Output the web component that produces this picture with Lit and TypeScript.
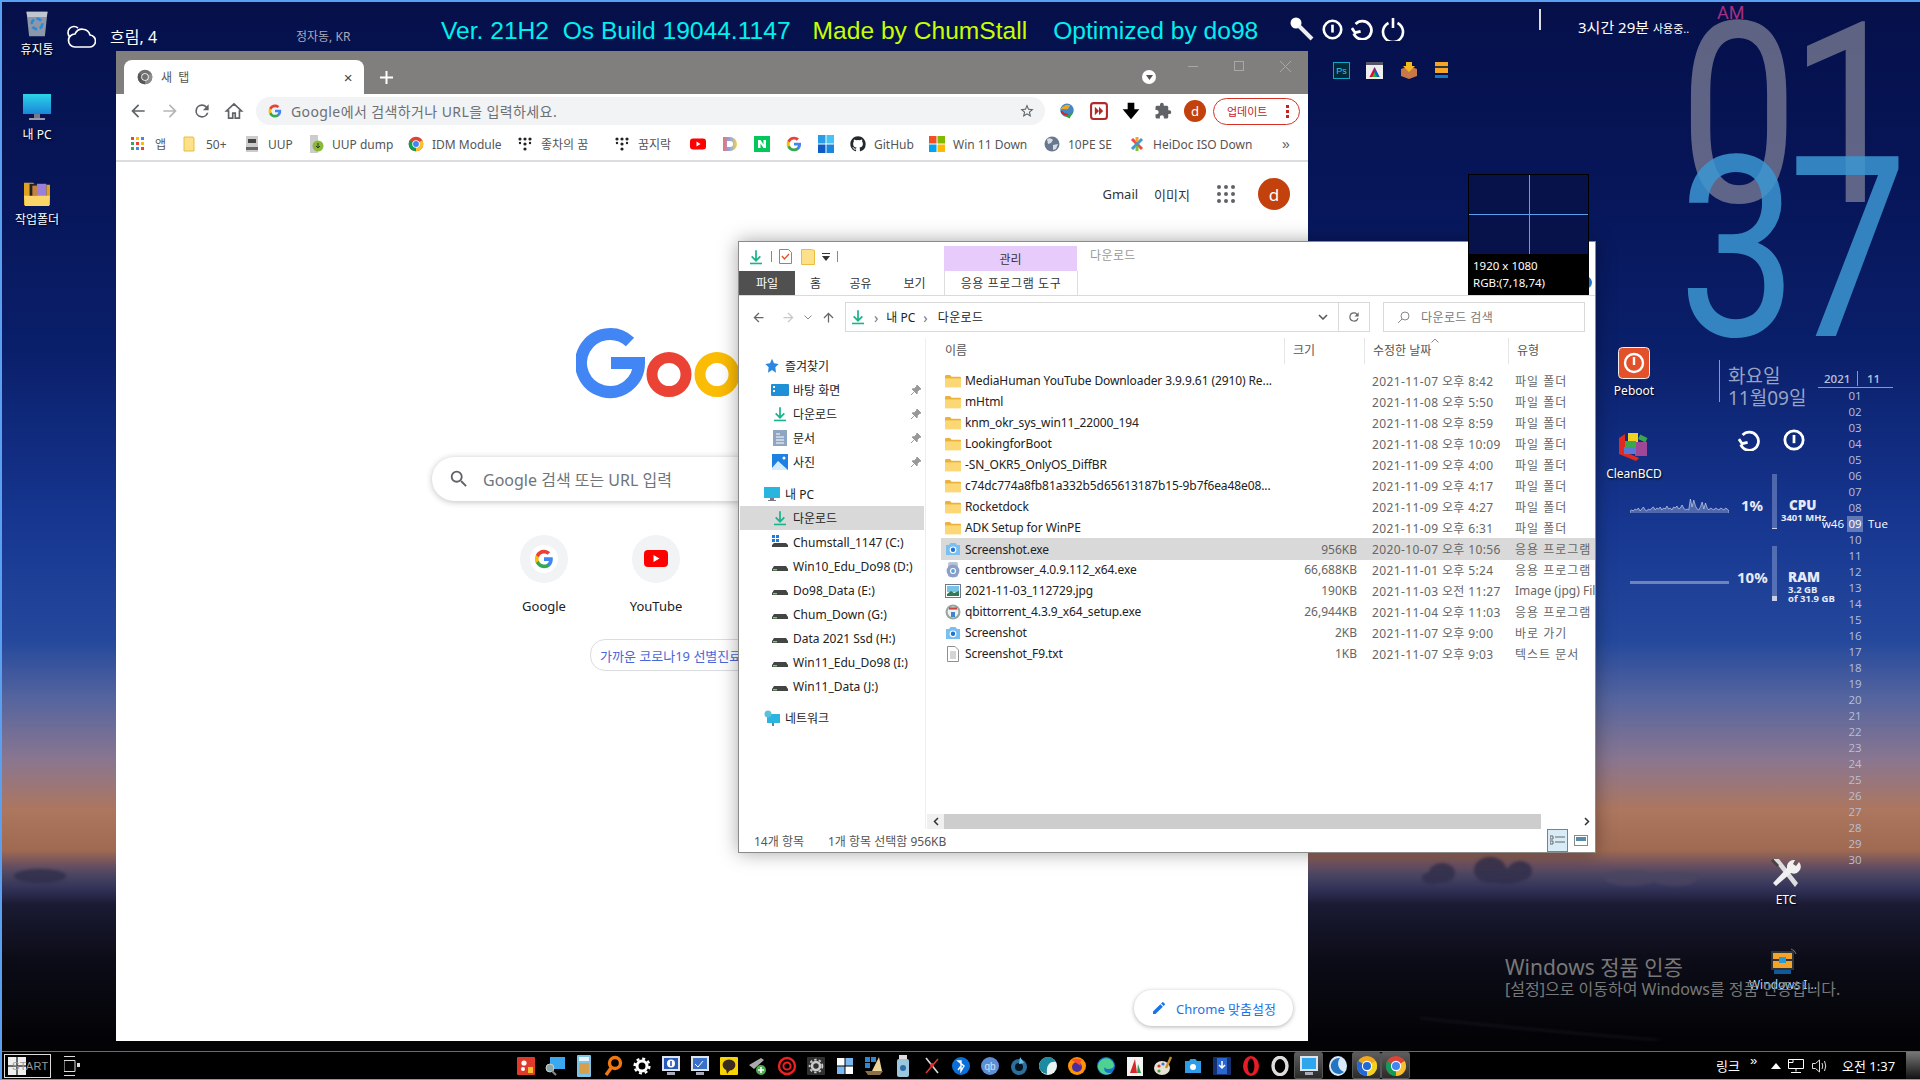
import { LitElement, html, css, svg } from 'lit';
import { customElement } from 'lit/decorators.js';

const mp = (d: string, fill = 'currentColor') => svg`<path d=${d} fill=${fill}></path>`;
const box = (inner: unknown, size = 16, vb = 24) =>
  html`<svg width=${size} height=${size} viewBox="0 0 ${vb} ${vb}">${inner}</svg>`;

const P = {
  back: 'M20 11H7.83l5.59-5.59L12 4l-8 8 8 8 1.41-1.41L7.83 13H20v-2z',
  fwd: 'M4 11h12.17l-5.59-5.59L12 4l8 8-8 8-1.41-1.41L16.17 13H4v-2z',
  up: 'M11 20V7.83l-5.59 5.59L4 12l8-8 8 8-1.41 1.41L13 7.83V20h-2z',
  reload: 'M17.65 6.35A7.96 7.96 0 0 0 12 4a8 8 0 1 0 7.73 10h-2.08A6 6 0 1 1 12 6c1.66 0 3.14.69 4.22 1.78L13 11h7V4l-2.35 2.35z',
  star: 'M22 9.24l-7.19-.62L12 2 9.19 8.63 2 9.24l5.46 4.73L5.82 21 12 17.27 18.18 21l-1.63-7.03L22 9.24zM12 15.4l-3.76 2.27 1-4.28-3.32-2.88 4.38-.38L12 6.1l1.71 4.04 4.38.38-3.32 2.88 1 4.28L12 15.4z',
  puzzle: 'M20.5 11H19V7c0-1.1-.9-2-2-2h-4V3.5a2.5 2.5 0 0 0-5 0V5H4c-1.1 0-1.99.9-1.99 2v3.8H3.5c1.49 0 2.7 1.21 2.7 2.7s-1.21 2.7-2.7 2.7H2V20c0 1.1.9 2 2 2h3.8v-1.5c0-1.49 1.21-2.7 2.7-2.7s2.7 1.21 2.7 2.7V22H17c1.1 0 2-.9 2-2v-4h1.5a2.5 2.5 0 0 0 0-5z',
  search: 'M15.5 14h-.79l-.28-.27A6.47 6.47 0 0 0 16 9.5 6.5 6.5 0 1 0 9.5 16c1.61 0 3.09-.59 4.23-1.57l.27.28v.79l5 4.99L20.49 19l-4.99-5zm-6 0C7.01 14 5 11.99 5 9.5S7.01 5 9.5 5 14 7.01 14 9.5 11.99 14 9.5 14z',
  pencil: 'M3 17.25V21h3.75L17.81 9.94l-3.75-3.75L3 17.25zM20.71 7.04a1 1 0 0 0 0-1.41l-2.34-2.34a1 1 0 0 0-1.41 0l-1.83 1.83 3.75 3.75 1.83-1.83z',
  github: 'M12 .5C5.65.5.5 5.65.5 12c0 5.08 3.29 9.39 7.86 10.91.58.1.79-.25.79-.56v-2c-3.2.7-3.87-1.36-3.87-1.36-.52-1.33-1.28-1.68-1.28-1.68-1.05-.72.08-.7.08-.7 1.16.08 1.77 1.19 1.77 1.19 1.03 1.77 2.7 1.26 3.36.96.1-.75.4-1.26.73-1.55-2.55-.29-5.24-1.28-5.24-5.69 0-1.26.45-2.28 1.18-3.09-.12-.29-.51-1.46.11-3.05 0 0 .96-.31 3.15 1.18a10.9 10.9 0 0 1 5.74 0c2.19-1.49 3.15-1.18 3.15-1.18.62 1.59.23 2.76.11 3.05.74.81 1.18 1.83 1.18 3.09 0 4.42-2.69 5.39-5.26 5.68.41.36.78 1.05.78 2.12v3.14c0 .3.21.66.8.55A11.5 11.5 0 0 0 23.5 12C23.5 5.65 18.35.5 12 .5z',
};

const gLogo = (size = 16) => box(svg`
  ${mp('M22.56 12.25c0-.78-.07-1.53-.2-2.25H12v4.26h5.92c-.26 1.37-1.04 2.53-2.21 3.31v2.77h3.57c2.08-1.92 3.28-4.74 3.28-8.09z', '#4285f4')}
  ${mp('M12 23c2.97 0 5.46-.98 7.28-2.66l-3.57-2.77c-.98.66-2.23 1.06-3.71 1.06-2.86 0-5.29-1.93-6.16-4.53H2.18v2.84C3.99 20.53 7.7 23 12 23z', '#34a853')}
  ${mp('M5.84 14.09c-.22-.66-.35-1.36-.35-2.09s.13-1.43.35-2.09V7.07H2.18C1.43 8.55 1 10.22 1 12s.43 3.45 1.18 4.93l3.66-2.84z', '#fbbc05')}
  ${mp('M12 5.38c1.62 0 3.06.56 4.21 1.64l3.15-3.15C17.45 2.09 14.97 1 12 1 7.7 1 3.99 3.47 2.18 7.07l3.66 2.84c.87-2.6 3.3-4.53 6.16-4.53z', '#ea4335')}`, size);

const chromeLogo = (size = 16, r = '#db4437', g = '#0f9d58', y = '#fbc02d', b = '#4285f4') => box(svg`
  <circle cx="12" cy="12" r="11" fill=${r}></circle>
  <path d="M12 12L2.5 6.5A11 11 0 0 0 12 23z" fill=${g}></path>
  <path d="M12 12V23A11 11 0 0 0 21.5 6.5z" fill=${y}></path>
  <circle cx="12" cy="12" r="5.6" fill="#fff"></circle><circle cx="12" cy="12" r="4.4" fill=${b}></circle>`, size);

const dlArrow = (size = 16) => box(svg`
  <path d="M12 2v15M5.5 11l6.5 6.5 6.5-6.5" fill="none" stroke="#1bb38d" stroke-width="2.6"></path>
  <rect x="3" y="20.5" width="18" height="2.4" fill="#1bb38d"></rect>`, size);

const folderIcon = html`<svg width="16" height="14" viewBox="0 0 16 14">
  <path d="M0 2.2Q0 1 1.2 1H5l1.6 1.8H15Q16 2.8 16 3.8V13H0z" fill="#eab23a"></path>
  <path d="M0 4.4H16V13.4H0z" fill="#fbd875"></path></svg>`;

const driveIcon = html`<svg width="16" height="16" viewBox="0 0 16 16">
  <path d="M2 8h12l2 3v2H0v-2z" fill="#444"></path><rect x="1" y="11" width="4" height="1.4" fill="#5be05b"></rect></svg>`;

const sysDrive = html`<svg width="16" height="16" viewBox="0 0 16 16">
  <rect x="0" y="1" width="3" height="3" fill="#1c7ce0"></rect><rect x="4" y="1" width="3" height="3" fill="#1c7ce0"></rect>
  <rect x="0" y="5" width="3" height="3" fill="#1c7ce0"></rect><rect x="4" y="5" width="3" height="3" fill="#1c7ce0"></rect>
  <path d="M2 9h12l2 2v2H0v-2z" fill="#444"></path></svg>`;

const cameraIcon = html`<svg width="16" height="16" viewBox="0 0 16 16">
  <path d="M1 4h3l1.5-2h5L12 4h3v10H1z" fill="#79bff0"></path>
  <circle cx="8" cy="8.8" r="3.4" fill="#fff"></circle><circle cx="8" cy="8.8" r="2.2" fill="#1f74d6"></circle></svg>`;

const centIcon = html`<svg width="16" height="16" viewBox="0 0 16 16">
  <rect x="3" y="0" width="10" height="15" rx="2" fill="#b9c3d8"></rect>
  <circle cx="8" cy="9" r="6.4" fill="#8e9ec5"></circle><circle cx="8" cy="9" r="3" fill="#fff"></circle><circle cx="8" cy="9" r="1.9" fill="#4fa5dd"></circle></svg>`;

const jpgIcon = html`<svg width="16" height="16" viewBox="0 0 16 16">
  <rect x=".5" y="1.5" width="15" height="13" fill="#fff" stroke="#6e7a8a"></rect>
  <rect x="2" y="3" width="12" height="6" fill="#78c3e8"></rect><path d="M2 11l4-3 3 2 5-2v5H2z" fill="#2f7a5a"></path></svg>`;

const qbitIcon = html`<svg width="16" height="16" viewBox="0 0 16 16">
  <circle cx="8" cy="8" r="7.5" fill="#9aa5a0"></circle><circle cx="8" cy="8" r="5.4" fill="#eef2ee"></circle>
  <rect x="4" y="3.4" width="8" height="2.2" fill="#c44"></rect><rect x="6" y="8" width="4" height="5" fill="#3a86d0"></rect></svg>`;

const txtIcon = html`<svg width="16" height="16" viewBox="0 0 16 16">
  <path d="M2.5.5h7.5l3.5 3.5v11.5h-11z" fill="#fff" stroke="#8f8f8f"></path>
  <path d="M5 6h6M5 8h6M5 10h6M5 12h6" stroke="#aaa"></path></svg>`;

const pinIcon = html`<svg width="12" height="12" viewBox="0 0 12 12">
  <path d="M7 1l4 4-1.4.4-2.3 2.3L7 10 2 5l2.3-.3 2.3-2.3zM3.8 8.2L1 11" fill="#999" stroke="#999"></path></svg>`;

const powerRing = (size = 22) => html`<svg width=${size} height=${size} viewBox="0 0 24 24" fill="none" stroke="#fff" stroke-width="3">
  <circle cx="12" cy="12" r="10"></circle><path d="M12 6.5v9"></path></svg>`;
const refreshRing = (size = 22) => html`<svg width=${size} height=${size} viewBox="0 0 24 24" fill="none" stroke="#fff" stroke-width="3">
  <path d="M5 6.5A10 10 0 1 1 3 17"></path><path d="M1 11l3.5 5 6-1.5" fill="none"></path></svg>`;
const powerOpen = (size = 24) => html`<svg width=${size} height=${size} viewBox="0 0 24 24" fill="none" stroke="#fff" stroke-width="2.6">
  <path d="M7.5 6a10 10 0 1 0 9 0"></path><path d="M12 1v10"></path></svg>`;

const square = (c: string, inner: unknown = '') => html`<svg width="18" height="18" viewBox="0 0 18 18"><rect width="18" height="18" rx="1" fill=${c}></rect>${inner}</svg>`;
const round = (c: string, inner: unknown = '') => html`<svg width="20" height="20" viewBox="0 0 20 20"><circle cx="10" cy="10" r="9" fill=${c}></circle>${inner}</svg>`;
const monitor = (c: string, inner: unknown = '') => html`<svg width="20" height="22" viewBox="0 0 20 22">
  <rect x="1" y="1" width="18" height="15" fill="#dfe3ea"></rect><rect x="3" y="3" width="14" height="11" fill=${c}></rect>
  <rect x="6" y="17" width="8" height="3" fill="#aab"></rect>${inner}</svg>`;

const bars = (colors: string[], size = 16) => html`<svg width=${size} height=${size} viewBox="0 0 16 16">
  <rect width="7.5" height="7.5" fill=${colors[0]}></rect><rect x="8.5" width="7.5" height="7.5" fill=${colors[1]}></rect>
  <rect y="8.5" width="7.5" height="7.5" fill=${colors[2]}></rect><rect x="8.5" y="8.5" width="7.5" height="7.5" fill=${colors[3]}></rect></svg>`;

const taskIcons: { icon: unknown; active?: boolean }[] = [
  { icon: square('#e03a2a', svg`<circle cx="7" cy="6" r="2.6" fill="#fff"></circle><circle cx="6" cy="12" r="2" fill="#fff"></circle><rect x="11" y="10" width="5" height="6" fill="#f8c030"></rect>`) },
  { icon: html`<svg width="22" height="20" viewBox="0 0 22 20"><rect x="6" y="1" width="15" height="12" fill="#3ba8f0"></rect><circle cx="6" cy="12" r="4" fill="#8aa" stroke="#ccc"></circle><path d="M8 15l4 4" stroke="#888" stroke-width="2"></path></svg>` },
  { icon: html`<svg width="14" height="22" viewBox="0 0 14 22"><rect width="14" height="22" rx="1" fill="#7cc4e8"></rect><rect x="2" y="2" width="10" height="4" fill="#e8f4fa"></rect><rect x="2" y="8" width="10" height="11" fill="#d7a04c"></rect></svg>` },
  { icon: html`<svg width="20" height="22" viewBox="0 0 20 22" fill="none" stroke="#f07810" stroke-width="3.4"><circle cx="12" cy="8" r="5.5"></circle><path d="M8 13l-5 7"></path></svg>` },
  { icon: html`<svg width="18" height="18" viewBox="0 0 18 18"><circle cx="9" cy="9" r="5" fill="none" stroke="#fff" stroke-width="3"></circle><circle cx="9" cy="9" r="7.4" fill="none" stroke="#fff" stroke-width="2.4" stroke-dasharray="3 2.8"></circle></svg>` },
  { icon: monitor('#2858b8', svg`<circle cx="10" cy="8.5" r="4" fill="#fff"></circle><rect x="9.2" y="6" width="1.6" height="5" fill="#2858b8"></rect>`) },
  { icon: monitor('#3a70c8', svg`<path d="M5 9l3 3 5-6" stroke="#fff" fill="none"></path>`) },
  { icon: square('#f8d400', svg`<ellipse cx="9" cy="8" rx="6.4" ry="5.6" fill="#3a2a20"></ellipse><path d="M6 12l1 5 3-4z" fill="#3a2a20"></path>`) },
  { icon: html`<svg width="20" height="20" viewBox="0 0 20 20"><path d="M1 9l12-7 3 2-10 9z" fill="#aaa"></path><circle cx="13" cy="14" r="5" fill="#4cb050"></circle><path d="M13 11v6M10 14h6" stroke="#fff" stroke-width="1.6"></path></svg>` },
  { icon: html`<svg width="20" height="20" viewBox="0 0 20 20" fill="none" stroke="#ee2020"><circle cx="10" cy="10" r="8" stroke-width="2.4"></circle><circle cx="10" cy="10" r="3.6" stroke-width="2"></circle></svg>` },
  { icon: square('#303030', svg`<circle cx="9" cy="9" r="4" fill="none" stroke="#ccc" stroke-width="2.6"></circle><circle cx="9" cy="9" r="6.4" fill="none" stroke="#ccc" stroke-width="1.8" stroke-dasharray="2.4 2.2"></circle>`) },
  { icon: bars(['#fff', '#7ab8f0', '#7ab8f0', '#fff']) },
  { icon: html`<svg width="20" height="22" viewBox="0 0 20 22"><rect x="1" y="2" width="5" height="5" fill="#2a86d8"></rect><rect x="7" y="2" width="5" height="5" fill="#2a86d8"></rect><rect x="1" y="8" width="5" height="5" fill="#2a86d8"></rect><path d="M8 16L15 2l3 14z" fill="#ecd69c"></path><path d="M1 16h18l-3 4H4z" fill="#8a6f48"></path></svg>` },
  { icon: html`<svg width="14" height="22" viewBox="0 0 14 22"><rect x="3" y="0" width="8" height="4" fill="#ddd"></rect><rect x="1" y="4" width="12" height="18" rx="2" fill="#9cc6de"></rect><circle cx="7" cy="13" r="3" fill="#2b6ea8"></circle></svg>` },
  { icon: html`<svg width="18" height="20" viewBox="0 0 18 20" fill="none" stroke-width="1.6"><path d="M3 2l12 15" stroke="#ddd"></path><path d="M15 3L3 17" stroke="#d33"></path><circle cx="9" cy="9" r="2" fill="#d33" stroke="none"></circle></svg>` },
  { icon: round('#0a6fd8', svg`<path d="M7 5l6 5-3 5V5zM7 14l3-4" stroke="#fff" fill="none" stroke-width="1.4"></path>`) },
  { icon: round('#5d8fd6', svg`<text x="10" y="13.6" font-size="10" font-family="Liberation Sans" text-anchor="middle" fill="#cfe0f8">qb</text>`) },
  { icon: html`<svg width="18" height="20" viewBox="0 0 18 20"><circle cx="9" cy="11" r="8" fill="#2a6f9e"></circle><circle cx="9" cy="11" r="4" fill="#061420"></circle><path d="M10 1l4 6-5 1z" fill="#6bc0ea"></path></svg>` },
  { icon: round('#e8f4f4', svg`<path d="M1 10a9 9 0 0 1 17-4C12 5 8 9 9 18 4 17 1 14 1 10z" fill="#1c8aa0"></path>`) },
  { icon: round('#ff9400', svg`<circle cx="10" cy="11" r="5" fill="#4a2ea0"></circle><path d="M4 4q6-3 11 0-3 2-1 6l-6-4z" fill="#ff4d30"></path>`) },
  { icon: round('#1673c8', svg`<path d="M2 12a8 8 0 0 1 16-3c0 3-3 4-6 4-2 0-3-1-3-2-2 2 0 6 4 6 2 0 3 0 4-1a9 9 0 0 1-15-4z" fill="#4ed290"></path>`) },
  { icon: html`<svg width="16" height="20" viewBox="0 0 16 20"><rect y="1" width="16" height="19" fill="#f4f4f4"></rect><path d="M3 17L8 3l2 14z" fill="#d62828"></path><path d="M10 17l1-9 3 9z" fill="#2a9a50"></path></svg>` },
  { icon: html`<svg width="20" height="20" viewBox="0 0 20 20"><ellipse cx="8" cy="12" rx="8" ry="7" fill="#e8e2d2"></ellipse><circle cx="5" cy="10" r="1.6" fill="#d33"></circle><circle cx="9" cy="8" r="1.6" fill="#3a70d8"></circle><circle cx="5" cy="15" r="1.6" fill="#3aa84a"></circle><path d="M17 1l-5 11" stroke="#c8902a" stroke-width="2.4"></path></svg>` },
  { icon: html`<svg width="18" height="16" viewBox="0 0 18 16"><path d="M1 3h4l1.5-2h5L13 3h4v12H1z" fill="#2f9ce8"></path><circle cx="9" cy="9" r="3" fill="#fff"></circle></svg>` },
  { icon: square('#14306e', svg`<rect x="4" y="1" width="10" height="16" fill="#2a66d0"></rect><path d="M9 4v7M6 8l3 3 3-3" stroke="#fff" fill="none" stroke-width="1.5"></path>`) },
  { icon: html`<svg width="18" height="22" viewBox="0 0 18 22"><ellipse cx="9" cy="11" rx="8" ry="10" fill="#e81c24"></ellipse><ellipse cx="9" cy="11" rx="3.4" ry="7.6" fill="#000"></ellipse></svg>` },
  { icon: html`<svg width="18" height="20" viewBox="0 0 18 20"><ellipse cx="9" cy="10" rx="7" ry="8.6" fill="none" stroke="#ddd" stroke-width="3.4"></ellipse></svg>` },
  { icon: monitor('#2ea6ee'), active: true },
  { icon: html`<svg width="20" height="22" viewBox="0 0 20 22"><ellipse cx="10" cy="11" rx="9" ry="10" fill="#d8e8f8"></ellipse><path d="M12 3a8 8 0 1 0 4 14A9 9 0 0 1 12 3z" fill="#2474c4"></path></svg>` },
  { icon: chromeLogo(22, '#f2a81e', '#2468d8', '#f2d21e', '#2468d8'), active: true },
  { icon: chromeLogo(22), active: true },
];

@customElement('task-bar')
export class TaskBar extends LitElement {
  static styles = css`
    :host { display: flex; align-items: center; height: 27px; background: #000; border-top: 1px solid #6b6b6b; color: #fff; }
    .start { box-sizing: border-box; width: 47px; height: 24px; margin-left: 4px; border: 1px solid #ddd; position: relative; display: flex; align-items: center; }
    .start svg { position: absolute; left: 3px; top: 2px; }
    .start span { font: 11px "Liberation Sans", sans-serif; color: #999; margin-left: 7px; letter-spacing: .3px; position: relative; }
    .view { margin-left: 13px; display: flex; }
    .icons { margin-left: 431px; display: flex; align-items: center; height: 100%; }
    .slot { width: 29px; height: 100%; display: flex; align-items: center; justify-content: center; }
    .slot.active { box-sizing: border-box; background: linear-gradient(#5d5d5d, #2a2a2a); border: 1px solid #555; border-radius: 2px; }
    .tray { margin-left: auto; display: flex; align-items: center; height: 100%; font-size: 13px; }
    .tray .link { width: 34px; }
    .tray .more { width: 21px; font: 13px "Liberation Sans", sans-serif; margin-top: -10px; }
    .tray .up { width: 17px; display: flex; }
    .tray .net { width: 24px; display: flex; }
    .tray .vol { width: 30px; display: flex; }
    .tray .clock { width: 64px; }
    .tray .desk { width: 14px; height: 100%; background: linear-gradient(#777, #111); }
  `;

  render() {
    return html`
      <div class="start">
        ${bars(['#eee', '#eee', '#eee', '#eee'], 18)}
        <span>START</span>
      </div>
      <div class="view">
        <svg width="16" height="20" viewBox="0 0 16 20" fill="none" stroke="#ddd"><path d="M0 .5h11M0 4.5h11v11H0zM0 19.5h11"></path><rect x="13" y="7" width="3" height="4" fill="#ddd" stroke="none"></rect></svg>
      </div>
      <div class="icons">
        ${taskIcons.map(t => html`<div class="slot ${t.active ? 'active' : ''}">${t.icon}</div>`)}
      </div>
      <div class="tray">
        <span class="link">링크</span>
        <span class="more">»</span>
        <span class="up"><svg width="10" height="6" viewBox="0 0 10 6"><path d="M0 6L5 0l5 6z" fill="#fff"></path></svg></span>
        <span class="net"><svg width="16" height="14" viewBox="0 0 16 14" fill="none" stroke="#fff"><path d="M5 .5h10.5v9H.5v-9H5v3H.5M8 9.5v3M3 13.5h10"></path></svg></span>
        <span class="vol"><svg width="16" height="14" viewBox="0 0 16 14" fill="none" stroke="#ddd"><path d="M.5 4.5h3l4-3.500v12l-4-3.500h-3zM10 4q1.500 3 0 6M12.500 2q2.500 5 0 10"></path></svg></span>
        <span class="clock">오전 1:37</span>
        <span class="desk"></span>
      </div>
    `;
  }
}

const dotsIcon = html`<svg width="16" height="16" viewBox="0 0 16 16" fill="#222"><circle cx="3" cy="3" r="1.6"></circle><circle cx="8" cy="3" r="1.6"></circle><circle cx="13" cy="3" r="1.6"></circle><circle cx="8" cy="8" r="1.6"></circle><circle cx="8" cy="13" r="1.6"></circle><circle cx="3" cy="7" r="1.2"></circle><circle cx="13" cy="7" r="1.2"></circle></svg>`;
const gridColors = ['#ea4335', '#fbbc05', '#4285f4', '#34a853', '#ea4335', '#fbbc05', '#34a853', '#4285f4', '#ea4335'];

const bookmarks: { w: number; icon: unknown; label?: string }[] = [
  { w: 51, label: '앱', icon: html`<svg width="16" height="16" viewBox="0 0 16 16">${[0, 1, 2].flatMap(r => [0, 1, 2].map(c => svg`<rect x=${c * 5} y=${r * 5 + 1} width="3" height="3" fill=${gridColors[r * 3 + c]}></rect>`))}</svg>` },
  { w: 62, label: '50+', icon: html`<svg width="16" height="16" viewBox="0 0 16 16"><path d="M2 1h9l1 1v13H2z" fill="#fce08a" stroke="#e8bd40"></path></svg>` },
  { w: 64, label: 'UUP', icon: html`<svg width="16" height="18" viewBox="0 0 16 18"><rect x="2" y="1" width="12" height="16" fill="#ccc"></rect><rect x="4" y="4" width="8" height="4" fill="#444"></rect><rect x="2" y="12" width="12" height="3" fill="#666"></rect></svg>` },
  { w: 100, label: 'UUP dump', icon: html`<svg width="16" height="18" viewBox="0 0 16 18"><rect x="2" y="0" width="8" height="18" fill="#ccc"></rect><circle cx="10" cy="11" r="5.5" fill="#8ab838"></circle><path d="M10 8v5M8 11l2 2 2-2" stroke="#333" fill="none"></path></svg>` },
  { w: 109, label: 'IDM Module', icon: chromeLogo(16) },
  { w: 97, label: '좋차의 꿈', icon: dotsIcon },
  { w: 76, label: '꿈지락', icon: dotsIcon },
  { w: 32, icon: html`<svg width="16" height="16" viewBox="0 0 16 16"><rect y="2.5" width="16" height="11" rx="3" fill="#f00"></rect><path d="M6.5 5.5l4 2.500-4 2.500z" fill="#fff"></path></svg>` },
  { w: 32, icon: html`<svg width="16" height="16" viewBox="0 0 16 16"><defs><linearGradient id="dg"><stop offset="0" stop-color="#f0706a"></stop><stop offset=".5" stop-color="#8aa8f0"></stop><stop offset="1" stop-color="#f8d040"></stop></linearGradient></defs><path fill-rule="evenodd" d="M1 1h7a7 7 0 0 1 0 14H1zM5 5v6h3a3 3 0 0 0 0-6z" fill="url(#dg)"></path></svg>` },
  { w: 32, icon: html`<svg width="16" height="16" viewBox="0 0 16 16"><rect width="16" height="16" fill="#03c75a"></rect><path d="M4 12V4h2.500l3 4.500V4H12v8H9.500l-3-4.500V12z" fill="#fff"></path></svg>` },
  { w: 32, icon: gLogo(16) },
  { w: 32, icon: html`<svg width="16" height="18" viewBox="0 0 16 18"><rect width="7.5" height="8.5" fill="#2a9ce8"></rect><rect x="8.5" width="7.5" height="8.5" fill="#48c4f4"></rect><rect y="9.5" width="7.5" height="8.5" fill="#0d5cc4"></rect><rect x="8.5" y="9.5" width="7.5" height="8.5" fill="#1a86dc"></rect></svg>` },
  { w: 79, label: 'GitHub', icon: box(mp(P.github, '#24292e')) },
  { w: 115, label: 'Win 11 Down', icon: bars(['#f25022', '#7fba00', '#00a4ef', '#ffb900']) },
  { w: 85, label: '10PE SE', icon: html`<svg width="16" height="16" viewBox="0 0 16 16"><circle cx="8" cy="8" r="7.5" fill="#68788e"></circle><path d="M3 3q4-2 6 1l-2 3-3 1zM9 9l5-1-2 5-3 1z" fill="#d8dde5"></path></svg>` },
  { w: 149, label: 'HeiDoc ISO Down', icon: html`<svg width="16" height="16" viewBox="0 0 16 16" fill="none" stroke-width="3"><path d="M3 3l10 10" stroke="#f44a3c"></path><path d="M13 3L3 13" stroke="#3a9ad8"></path><path d="M8 1v5" stroke="#f8a020"></path><path d="M8 10v5" stroke="#7cc040"></path></svg>` },
];

@customElement('chrome-window')
export class ChromeWindow extends LitElement {
  static styles = css`
    :host { display: flex; flex-direction: column; background: #fff; color: #3c4043; }
    svg { flex: none; display: block; }
    .strip { height: 43px; flex: none; background: #807f7d; display: flex; }
    .tab { width: 240px; height: 34px; margin: 9px 0 0 8px; background: #fff; border-radius: 8px 8px 0 0; display: flex; align-items: center; padding: 0 10px 0 13px; box-sizing: border-box; font-size: 12px; gap: 8px; letter-spacing: 1.5px; color: #555; }
    .tab .x { margin-left: auto; font: 15px "Liberation Sans", sans-serif; color: #444; }
    .plus { margin: 9px 0 0 6px; width: 32px; height: 34px; display: flex; align-items: center; justify-content: center; }
    .drop { margin: 19px 14px 0 auto; width: 14px; height: 14px; border-radius: 50%; background: #fff; display: flex; align-items: center; justify-content: center; }
    .winbtn { width: 46px; height: 30px; display: flex; align-items: center; justify-content: center; }
    .bar { height: 34px; flex: none; display: flex; align-items: center; padding-left: 6px; }
    .slot { width: 32px; height: 32px; display: flex; align-items: center; justify-content: center; color: #5f6368; }
    .slot.off { color: #b5b6b8; }
    .omni { width: 789px; height: 28px; margin-left: 6px; margin-right: 6px; box-sizing: border-box; background: #f1f3f4; border-radius: 14px; display: flex; align-items: center; padding: 0 10px 0 12px; gap: 9px; font-size: 14px; letter-spacing: .4px; color: #6d7074; }
    .omni .star { margin-left: auto; color: #5f6368; }
    .avatar { width: 22px; height: 22px; border-radius: 50%; background: #c2410c; color: #fff; display: flex; align-items: center; justify-content: center; font-size: 13px; }
    .update { width: 87px; height: 27px; margin-left: 2px; box-sizing: border-box; border: 1px solid #d93025; border-radius: 14px; color: #c5221f; display: flex; align-items: center; padding-left: 13px; font-size: 11px; justify-content: space-between; padding-right: 10px; background: #fff; }
    .update i { width: 3px; height: 15px; display: block; background: radial-gradient(circle, #c5221f 1.5px, transparent 1.6px) 0 0 / 3px 5px; }
    .marks { height: 34px; flex: none; display: flex; align-items: center; padding-left: 15px; border-bottom: 2px solid #dadce0; box-sizing: border-box; font-size: 12px; color: #555; }
    .mark { display: flex; align-items: center; gap: 8px; flex: none; }
    .more { margin-left: 4px; font: 14px "Liberation Sans", sans-serif; color: #555; }
    .page { flex: 1; position: relative; display: flex; flex-direction: column; align-items: center; }
    .top { align-self: stretch; height: 64px; display: flex; align-items: center; justify-content: flex-end; padding-right: 18px; font-size: 13px; color: #333; }
    .top .img { margin-left: 16px; }
    .apps { margin-left: 27px; display: grid; grid-template-columns: repeat(3, 4px); gap: 3px; }
    .apps i { width: 4px; height: 4px; border-radius: 50%; background: #5f6368; }
    .bigav { width: 32px; height: 32px; font-size: 17px; margin-left: 23px; }
    .logo { margin: 101px 0 0 460px; align-self: flex-start; }
    .find { width: 560px; height: 44px; margin-top: 58px; box-sizing: border-box; border-radius: 22px; background: #fff; box-shadow: 0 1px 6px rgba(32, 33, 36, .28); display: flex; align-items: center; padding-left: 16px; gap: 13px; font-size: 16px; color: #70757a; }
    .tiles { width: 560px; margin-top: 34px; display: flex; padding-left: 56px; box-sizing: border-box; }
    .tile { width: 112px; display: flex; flex-direction: column; align-items: center; font-size: 13px; color: #202124; gap: 14px; }
    .tile .disc { width: 48px; height: 48px; border-radius: 50%; background: #f1f3f4; display: flex; align-items: center; justify-content: center; }
    .tile .in { width: 28px; height: 28px; border-radius: 50%; background: #fff; display: flex; align-items: center; justify-content: center; }
    .promo { align-self: flex-start; margin: 24px 0 0 474px; height: 30px; padding: 0 22px 0 9px; border: 1px solid #dadce0; border-radius: 15px; display: flex; align-items: center; font-size: 13px; color: #4a67d8; white-space: nowrap; }
    .custom { position: absolute; right: 15px; bottom: 15px; height: 36px; width: 159px; box-sizing: border-box; border-radius: 18px; background: #fff; box-shadow: 0 1px 4px rgba(60, 64, 67, .4); display: flex; align-items: center; padding-left: 17px; gap: 9px; font-size: 13px; color: #1a73e8; }
  `;

  render() {
    return html`
      <div class="strip">
        <div class="tab">${chromeLogo(16, '#707070', '#585858', '#8c8c8c', '#707070')}<span>새 탭</span><span class="x">×</span></div>
        <div class="plus"><svg width="13" height="13" viewBox="0 0 13 13"><path d="M6.5 0v13M0 6.5h13" stroke="#fff" stroke-width="2"></path></svg></div>
        <div class="drop"><svg width="7" height="5" viewBox="0 0 7 5"><path d="M0 0h7L3.5 5z" fill="#555"></path></svg></div>
        <div class="winbtn"><svg width="10" height="1" viewBox="0 0 10 1"><rect width="10" height="1" fill="#a8a8a8"></rect></svg></div>
        <div class="winbtn"><svg width="10" height="10" viewBox="0 0 10 10"><rect x=".5" y=".5" width="9" height="9" fill="none" stroke="#a8a8a8"></rect></svg></div>
        <div class="winbtn"><svg width="11" height="11" viewBox="0 0 11 11"><path d="M0 0l11 11M11 0L0 11" stroke="#a8a8a8"></path></svg></div>
      </div>
      <div class="bar">
        <div class="slot">${box(mp(P.back), 20)}</div>
        <div class="slot off">${box(mp(P.fwd), 20)}</div>
        <div class="slot">${box(mp(P.reload), 20)}</div>
        <div class="slot">${box(svg`<path d="M12 3.5L3 12h2.5v8.5h5v-6h3v6h5V12H21z" fill="none" stroke="#5f6368" stroke-width="2"></path>`, 20)}</div>
        <div class="omni">${gLogo(14)}<span>Google에서 검색하거나 URL을 입력하세요.</span><span class="star">${box(mp(P.star), 16)}</span></div>
        <div class="slot">${box(svg`<circle cx="12" cy="11" r="8" fill="#4285c8"></circle><path d="M4 10q5-7 12-5l-3 5z" fill="#e9a820"></path><path d="M6 16q7 5 14-4l-5 9z" fill="#34a02a"></path><path d="M5 12q3 5 8 4" stroke="#d82020" stroke-width="2" fill="none"></path>`, 20)}</div>
        <div class="slot">${box(svg`<rect x="2.5" y="2.5" width="19" height="19" rx="3" fill="#fff" stroke="#b02a2a" stroke-width="2.5"></rect><path d="M7 7l5 5-5 5zM12 7l5 5-5 5z" fill="#b02a2a"></path>`, 20)}</div>
        <div class="slot">${box(mp('M8 2h8v8h6L12 22 2 10h6z', '#000'), 20)}</div>
        <div class="slot">${box(mp(P.puzzle, '#5f6368'), 18)}</div>
        <div class="slot"><div class="avatar">d</div></div>
        <div class="update"><span>업데이트</span><i></i></div>
      </div>
      <div class="marks">
        ${bookmarks.map(b => html`<div class="mark" style="width:${b.w}px">${b.icon}${b.label ? html`<span>${b.label}</span>` : ''}</div>`)}
        <span class="more">»</span>
      </div>
      <div class="page">
        <div class="top">
          <span>Gmail</span><span class="img">이미지</span>
          <div class="apps">${Array.from({ length: 9 }, () => html`<i></i>`)}</div>
          <div class="avatar bigav">d</div>
        </div>
        <svg class="logo" width="280" height="72" viewBox="0 0 280 72">
          <path d="M54 15A29 29 0 1 0 63 36H35" fill="none" stroke="#4285f4" stroke-width="12"></path>
          <circle cx="93" cy="47.5" r="17" fill="none" stroke="#ea4335" stroke-width="11"></circle>
          <circle cx="141" cy="47.5" r="17" fill="none" stroke="#fbbc05" stroke-width="11"></circle>
        </svg>
        <div class="find">${box(mp(P.search, '#5f6368'), 22)}<span>Google 검색 또는 URL 입력</span></div>
        <div class="tiles">
          <div class="tile"><div class="disc"><div class="in">${gLogo(20)}</div></div><span>Google</span></div>
          <div class="tile"><div class="disc"><svg width="24" height="18" viewBox="0 0 24 18"><rect width="24" height="17" rx="4" fill="#f00"></rect><path d="M9.5 5l6 3.500-6 3.500z" fill="#fff"></path></svg></div><span>YouTube</span></div>
        </div>
        <div class="promo">가까운 코로나19 선별진료소 찾기</div>
        <div class="custom">${box(mp(P.pencil, '#1a73e8'), 16)}<span>Chrome 맞춤설정</span></div>
      </div>
    `;
  }
}

const folderType = '파일 폴더';
const appType = '응용 프로그램';
const files: { i: unknown; n: string; s?: string; d: string; t: string; sel?: boolean }[] = [
  { i: folderIcon, n: 'MediaHuman YouTube Downloader 3.9.9.61 (2910) Re...', d: '2021-11-07 오후 8:42', t: folderType },
  { i: folderIcon, n: 'mHtml', d: '2021-11-08 오후 5:50', t: folderType },
  { i: folderIcon, n: 'knm_okr_sys_win11_22000_194', d: '2021-11-08 오후 8:59', t: folderType },
  { i: folderIcon, n: 'LookingforBoot', d: '2021-11-08 오후 10:09', t: folderType },
  { i: folderIcon, n: '-SN_OKR5_OnlyOS_DiffBR', d: '2021-11-09 오후 4:00', t: folderType },
  { i: folderIcon, n: 'c74dc774a8fb81a332b5d65613187b15-9b7f6ea48e08...', d: '2021-11-09 오후 4:17', t: folderType },
  { i: folderIcon, n: 'Rocketdock', d: '2021-11-09 오후 4:27', t: folderType },
  { i: folderIcon, n: 'ADK Setup for WinPE', d: '2021-11-09 오후 6:31', t: folderType },
  { i: cameraIcon, n: 'Screenshot.exe', s: '956KB', d: '2020-10-07 오후 10:56', t: appType, sel: true },
  { i: centIcon, n: 'centbrowser_4.0.9.112_x64.exe', s: '66,688KB', d: '2021-11-01 오후 5:24', t: appType },
  { i: jpgIcon, n: '2021-11-03_112729.jpg', s: '190KB', d: '2021-11-03 오전 11:27', t: 'Image (jpg) File' },
  { i: qbitIcon, n: 'qbittorrent_4.3.9_x64_setup.exe', s: '26,944KB', d: '2021-11-04 오후 11:03', t: appType },
  { i: cameraIcon, n: 'Screenshot', s: '2KB', d: '2021-11-07 오후 9:00', t: '바로 가기' },
  { i: txtIcon, n: 'Screenshot_F9.txt', s: '1KB', d: '2021-11-07 오후 9:03', t: '텍스트 문서' },
];

const favs: { i: unknown; n: string }[] = [
  { i: html`<svg width="18" height="14" viewBox="0 0 18 14"><rect y="1" width="18" height="12" rx="1" fill="#1f8fd6"></rect><rect x="2" y="3" width="2" height="2" fill="#fff"></rect><rect x="2" y="7" width="2" height="2" fill="#fff"></rect></svg>`, n: '바탕 화면' },
  { i: dlArrow(16), n: '다운로드' },
  { i: html`<svg width="14" height="16" viewBox="0 0 14 16"><rect width="14" height="16" fill="#8ea6c4"></rect><path d="M3 4h4M3 7h8M3 10h8M3 13h8" stroke="#fff"></path></svg>`, n: '문서' },
  { i: html`<svg width="16" height="16" viewBox="0 0 16 16"><rect width="16" height="16" fill="#1e80e0"></rect><path d="M0 14l6-7 10 9H0z" fill="#d8ecff"></path><circle cx="12" cy="4" r="1.5" fill="#fff"></circle></svg>`, n: '사진' },
];

const drives = ['Chumstall_1147 (C:)', 'Win10_Edu_Do98 (D:)', 'Do98_Data (E:)', 'Chum_Down (G:)', 'Data 2021 Ssd (H:)', 'Win11_Edu_Do98 (I:)', 'Win11_Data (J:)'];

const pcIcon = html`<svg width="16" height="16" viewBox="0 0 16 16"><rect y="1" width="16" height="11" fill="#2ab4e0"></rect><rect x="6" y="12" width="4" height="2" fill="#778"></rect><rect x="4" y="14" width="8" height="1" fill="#778"></rect></svg>`;

@customElement('explorer-window')
export class ExplorerWindow extends LitElement {
  static styles = css`
    :host { display: flex; flex-direction: column; background: #fff; color: #222; box-sizing: border-box; border: 1px solid #8a8a8a; box-shadow: 0 0 18px rgba(0, 0, 0, .35); font-size: 12px; }
    svg { flex: none; display: block; }
    .title { height: 29px; flex: none; display: flex; position: relative; }
    .qa { width: 205px; display: flex; align-items: center; padding-left: 9px; box-sizing: border-box; gap: 7px; }
    .sep { width: 1px; height: 11px; background: #888; }
    .manage { width: 133px; margin-top: 4px; background: #e7ccfb; display: flex; align-items: center; justify-content: center; color: #333; }
    .wintitle { margin-left: 13px; margin-top: 2px; color: #999; line-height: 24px; letter-spacing: .4px; }
    .tabs { height: 24px; flex: none; display: flex; border-bottom: 1px solid #dadada; align-items: stretch; }
    .tabs div { display: flex; align-items: center; justify-content: center; color: #333; }
    .tabs .file { width: 56px; background: #505050; color: #fff; }
    .tabs .ctx { width: 132px; border-left: 1px solid #ddd; border-right: 1px solid #ddd; letter-spacing: .6px; }
    .tabs .help { margin-left: auto; width: 13px; height: 13px; margin-top: 5px; margin-right: 3px; border-radius: 50%; background: #1976d2; }
    .nav { height: 42px; flex: none; display: flex; align-items: flex-start; padding-top: 6px; box-sizing: border-box; }
    .navbtns { width: 106px; height: 30px; display: flex; align-items: center; padding-left: 12px; box-sizing: border-box; color: #666; }
    .addr { width: 525px; height: 30px; box-sizing: border-box; border: 1px solid #d9d9d9; display: flex; align-items: center; padding-left: 4px; color: #222; }
    .addr .crumb { margin: 0 8px 0 8px; color: #777; font-size: 14px; }
    .addr .last { margin-left: 2px; letter-spacing: .4px; }
    .addr .tail { margin-left: auto; display: flex; align-items: center; height: 100%; }
    .addr .tail span { width: 30px; height: 100%; display: flex; align-items: center; justify-content: center; }
    .addr .tail span + span { border-left: 1px solid #d9d9d9; }
    .sbox { width: 202px; height: 30px; margin-left: 13px; box-sizing: border-box; border: 1px solid #d9d9d9; display: flex; align-items: center; padding-left: 13px; gap: 11px; color: #777; letter-spacing: .4px; }
    .main { flex: 1; display: flex; min-height: 0; }
    .tree { width: 187px; flex: none; border-right: 1px solid #eee; padding: 16px 0 0 1px; box-sizing: border-box; }
    .node { height: 24px; width: 184px; display: flex; align-items: center; color: #222; }
    .node.one { padding-left: 24px; box-sizing: border-box; gap: 5px; }
    .node.two { padding-left: 32px; box-sizing: border-box; gap: 5px; }
    .node.sel { background: #d9d9d9; }
    .node .ic { width: 16px; display: flex; justify-content: center; }
    .node .pin { margin-left: auto; margin-right: 2px; }
    .gap { height: 8px; }
    .list { flex: 1; min-width: 0; display: flex; flex-direction: column; }
    .head { height: 32px; flex: none; display: grid; grid-template-columns: 343px 80px 144px 1fr; margin-left: 15px; align-items: stretch; color: #555; }
    .head span { display: flex; align-items: center; padding: 0 0 2px 8px; height: 26px; box-sizing: border-box; border-left: 1px solid #e5e5e5; }
    .head span:first-child { border: 0; padding-left: 4px; }
    .head .sort { position: relative; }
    .head .sort svg { position: absolute; left: 66px; top: 0; }
    .rows { flex: 1; min-height: 0; }
    .row { height: 21px; margin-left: 15px; display: grid; grid-template-columns: 343px 73px 158px 1fr; align-items: center; color: #666; white-space: nowrap; overflow: hidden; }
    .row.sel { background: #d9d9d9; height: 22px; margin-bottom: -1px; }
    .row .name { display: flex; align-items: center; gap: 4px; padding-left: 4px; color: #222; letter-spacing: -.1px; }
    .row .size { text-align: right; }
    .row .date { padding-left: 15px; letter-spacing: .38px; }
    .row .type { overflow: hidden; letter-spacing: 1px; }
    .row .type.lat { letter-spacing: 0; }
    .hbar { height: 15px; flex: none; display: flex; background: #fff; margin-left: 1px; }
    .hbar .end { width: 17px; background: #f0f0f0; display: flex; align-items: center; justify-content: center; }
    .hbar .thumb { width: 597px; background: #cdcdcd; }
    .hbar .end.r { margin-left: auto; background: #fff; }
    .status { height: 23px; flex: none; display: flex; align-items: center; padding-left: 15px; color: #555; }
    .status span:nth-child(2) { margin-left: 24px; }
    .views { margin-left: auto; height: 100%; display: flex; align-items: center; margin-right: 4px; gap: 2px; }
    .views div { width: 21px; height: 100%; display: flex; align-items: center; justify-content: center; box-sizing: border-box; }
    .views .on { border: 1px solid #2a9ad8; background: #d8ecf8; }
  `;

  render() {
    return html`
      <div class="title">
        <div class="qa">
          ${dlArrow(16)}<span class="sep"></span>
          <svg width="13" height="15" viewBox="0 0 13 15"><path d="M.5.5h9l3 3v11H.5z" fill="#fff" stroke="#888"></path><path d="M3 7l2.5 3L10 5" stroke="#e2562a" stroke-width="1.4" fill="none"></path></svg>
          <svg width="14" height="16" viewBox="0 0 14 16" style="margin-left:2px"><path d="M.5.5h10l3 1v14H.5z" fill="#fce08a" stroke="#e8bd40"></path></svg>
          <svg width="8" height="8" viewBox="0 0 8 8"><path d="M0 0h8v1H0zM0 3h8L4 8z" fill="#333"></path></svg>
          <span class="sep"></span>
        </div>
        <div class="manage">관리</div>
        <div class="wintitle">다운로드</div>
      </div>
      <div class="tabs">
        <div class="file">파일</div>
        <div style="width:41px">홈</div>
        <div style="width:49px">공유</div>
        <div style="width:59px">보기</div>
        <div class="ctx">응용 프로그램 도구</div>
        <div class="help"></div>
      </div>
      <div class="nav">
        <div class="navbtns">
          ${box(mp(P.back, '#666'), 15)}
          <span style="width:15px"></span>
          ${box(mp(P.fwd, '#c8c8c8'), 15)}
          <svg width="8" height="5" viewBox="0 0 8 5" style="margin-left:8px"><path d="M.5.5L4 4 7.5.5" fill="none" stroke="#888"></path></svg>
          <span style="width:9px"></span>
          ${box(mp(P.up, '#666'), 15)}
        </div>
        <div class="addr">
          ${dlArrow(16)}
          <span class="crumb">›</span><span>내 PC</span><span class="crumb">›</span><span class="last">다운로드</span>
          <div class="tail">
            <span><svg width="10" height="6" viewBox="0 0 10 6"><path d="M1 1l4 4 4-4" fill="none" stroke="#555" stroke-width="1.5"></path></svg></span>
            <span>${box(mp(P.reload, '#666'), 14)}</span>
          </div>
        </div>
        <div class="sbox">
          <svg width="13" height="13" viewBox="0 0 13 13" fill="none" stroke="#888"><circle cx="8" cy="5" r="4"></circle><path d="M5 8l-4 4"></path></svg>
          <span>다운로드 검색</span>
        </div>
      </div>
      <div class="main">
        <div class="tree">
          <div class="node one"><span class="ic">${box(mp('M12 1l3 7 7 1-5 5 1 8-6-4-6 4 1-8-5-5 7-1z', '#2a86e0'), 16)}</span>즐겨찾기</div>
          ${favs.map(f => html`<div class="node two"><span class="ic">${f.i}</span>${f.n}<span class="pin">${pinIcon}</span></div>`)}
          <div class="gap"></div>
          <div class="node one"><span class="ic">${pcIcon}</span>내 PC</div>
          <div class="node two sel"><span class="ic">${dlArrow(16)}</span>다운로드</div>
          ${drives.map((d, i) => html`<div class="node two"><span class="ic">${i === 0 ? sysDrive : driveIcon}</span>${d}</div>`)}
          <div class="gap"></div>
          <div class="node one"><span class="ic"><svg width="16" height="16" viewBox="0 0 16 16"><rect x="3" y="4" width="13" height="9" fill="#2ab4e0"></rect><circle cx="4" cy="4" r="3.5" fill="#5cc0d8"></circle><rect x="8" y="13" width="2" height="3" fill="#778"></rect></svg></span>네트워크</div>
        </div>
        <div class="list">
          <div class="head">
            <span>이름</span><span>크기</span>
            <span class="sort">수정한 날짜<svg width="8" height="5" viewBox="0 0 8 5"><path d="M.5 4.5L4 1l3.5 3.5" fill="none" stroke="#888"></path></svg></span>
            <span>유형</span>
          </div>
          <div class="rows">
            ${files.map(f => html`
              <div class="row ${f.sel ? 'sel' : ''}">
                <span class="name">${f.i}<span>${f.n}</span></span>
                <span class="size">${f.s ?? ''}</span>
                <span class="date">${f.d}</span>
                <span class="type ${/^[A-Z]/.test(f.t) ? 'lat' : ''}">${f.t}</span>
              </div>`)}
          </div>
          <div class="hbar">
            <div class="end"><svg width="6" height="9" viewBox="0 0 6 9"><path d="M5 1L1.5 4.5 5 8" fill="none" stroke="#333" stroke-width="1.5"></path></svg></div>
            <div class="thumb"></div>
            <div class="end r"><svg width="6" height="9" viewBox="0 0 6 9"><path d="M1 1l3.500 3.500L1 8" fill="none" stroke="#333" stroke-width="1.5"></path></svg></div>
          </div>
        </div>
      </div>
      <div class="status">
        <span>14개 항목</span><span>1개 항목 선택함 956KB</span>
        <div class="views">
          <div class="on"><svg width="15" height="11" viewBox="0 0 15 11"><path d="M0 1h3v3H0zM0 6h3v3H0zM5 2h10M5 7h10" fill="none" stroke="#666"></path></svg></div>
          <div><svg width="14" height="11" viewBox="0 0 14 11"><rect x=".5" y=".5" width="13" height="10" fill="#fff" stroke="#888"></rect><rect x="2" y="2" width="10" height="4" fill="#5a8aa8"></rect></svg></div>
        </div>
      </div>
    `;
  }
}

const spark = [2, 3, 2, 4, 3, 5, 2, 4, 6, 3, 2, 4, 3, 5, 6, 3, 5, 4, 6, 3, 5, 4, 7, 4, 5, 3, 6, 5, 7, 4, 5, 8, 5, 3, 4, 3, 14, 6, 13, 7, 4, 3, 6, 11, 4, 10, 5, 3, 5, 4, 3, 5, 4, 3, 5, 4, 3, 5, 4, 2];
const sparkPts = spark.map((h, i) => `${(i * 99) / (spark.length - 1)},${16 - h}`).join(' ');

const desktopIcons: { x: number; y: number; label: string; icon: unknown; blue?: boolean }[] = [
  { x: 37, y: 9, label: '휴지통', icon: html`<svg width="24" height="28" viewBox="0 0 26 32"><path d="M1 3h24l-3 28H4z" fill="#8d97a8"></path><path d="M1 3h24l-1 6H2z" fill="#c0c6d0"></path><circle cx="13" cy="17" r="6" fill="none" stroke="#2a8ad8" stroke-width="3" stroke-dasharray="6 3"></circle></svg>` },
  { x: 37, y: 94, label: '내 PC', icon: html`<svg width="28" height="28" viewBox="0 0 28 28"><defs><linearGradient id="sc" x1="0" y1="0" x2="0" y2="1"><stop offset="0" stop-color="#2ad4e8"></stop><stop offset="1" stop-color="#1a86d8"></stop></linearGradient></defs><rect width="28" height="20" fill="url(#sc)"></rect><rect x="11" y="20" width="6" height="4" fill="#778"></rect><rect x="6" y="24" width="16" height="2" fill="#99a"></rect></svg>` },
  { x: 37, y: 181, label: '작업폴더', icon: html`<svg width="28" height="26" viewBox="0 0 28 28"><path d="M0 2h10l2 2h16v22H0z" fill="#e0a020"></path><rect x="6" y="3" width="18" height="14" fill="#222"></rect><rect x="14" y="3" width="10" height="14" fill="#9a80d8"></rect><rect x="9" y="5" width="5" height="11" fill="#c88040"></rect><path d="M0 16h28l-1 11H1z" fill="#fbd566"></path></svg>` },
  { x: 1634, y: 347, label: 'Peboot', icon: html`<svg width="32" height="32" viewBox="0 0 32 32"><rect x=".5" y=".5" width="31" height="31" rx="4" fill="#e2512a" stroke="#eee"></rect><circle cx="16" cy="16" r="9" fill="none" stroke="#fff" stroke-width="2.4"></circle><path d="M16 10v8" stroke="#fff" stroke-width="2.4"></path></svg>` },
  { x: 1634, y: 432, label: 'CleanBCD', icon: html`<svg width="30" height="30" viewBox="0 0 30 30"><path d="M0 6l6-4v18l14 6-3 3L0 22z" fill="#e02a20"></path><rect x="16" y="10" width="12" height="14" fill="#a04898"></rect><rect x="9" y="1" width="10" height="9" fill="#f0d020"></rect><rect x="20" y="4" width="8" height="5" fill="#3aa84a" transform="rotate(25 24 6)"></rect><rect x="6" y="9" width="11" height="6" fill="#3aa84a"></rect><rect x="5" y="15" width="12" height="7" fill="#5a78d8"></rect></svg>` },
  { x: 1786, y: 858, label: 'ETC', icon: html`<svg width="30" height="30" viewBox="0 0 30 30"><path d="M3 1l5 0 19 24-3 4-21-27z" fill="#ddd"></path><path d="M28 4l-3 4-3-2 2-4a7 7 0 0 0-8 8L2 25l3 3 15-13a7 7 0 0 0 8-11z" fill="#f0f0f0"></path><path d="M2 1l6 6-2 2-6-6z" fill="#444"></path></svg>` },
  { x: 1783, y: 948, label: 'Windows I...', blue: true, icon: html`<svg width="28" height="28" viewBox="0 0 28 28"><path d="M22 1q4 1 5 5" fill="none" stroke="#777"></path><rect x="3" y="4" width="21" height="17" fill="#f4a428" stroke="#333" stroke-width="2"></rect><rect x="3" y="11" width="21" height="2" fill="#333"></rect><rect x="10" y="9" width="7" height="6" fill="#2a9ad8"></rect><rect x="5" y="22" width="17" height="4" fill="#0f5a9a"></rect></svg>` },
];

const tops = [
  { x: 1333, i: html`<svg width="17" height="17" viewBox="0 0 17 17"><rect x=".5" y=".5" width="16" height="16" fill="#002a3a" stroke="#10a8c8"></rect><text x="8.5" y="12" font-size="9" font-family="Liberation Sans" text-anchor="middle" fill="#30c8f0">Ps</text></svg>` },
  { x: 1366, i: html`<svg width="17" height="17" viewBox="0 0 17 17"><rect width="17" height="17" fill="#eee"></rect><rect width="17" height="3" fill="#556"></rect><path d="M8.5 5l5 10h-10z" fill="#e03"></path><path d="M8.5 5l5 10h-5z" fill="#06c"></path><path d="M6 15l2.5-5 2.5 5z" fill="#3a3"></path></svg>` },
  { x: 1401, i: html`<svg width="16" height="17" viewBox="0 0 16 17"><path d="M8 4l8 3v7l-8 3-8-3V7z" fill="#c87848"></path><path d="M5 0h6v4h3L8 10 2 4h3z" fill="#f4b820"></path></svg>` },
  { x: 1435, i: html`<svg width="13" height="17" viewBox="0 0 13 17"><rect width="13" height="11" fill="#f4a428"></rect><rect y="4" width="13" height="2" fill="#333"></rect><rect y="13" width="13" height="3" fill="#0f7ac0"></rect></svg>` },
];

@customElement('desk-widgets')
export class DeskWidgets extends LitElement {
  static styles = css`
    :host { position: absolute; inset: 0; display: block; color: #fff; }
    svg { display: block; }
    .dicon { position: absolute; width: 90px; margin-left: -45px; display: flex; flex-direction: column; align-items: center; font-size: 12px; text-shadow: 1px 1px 2px #000; }
    .dicon span { margin-top: 3px; }
    .dicon.blue span { color: #a8d8ff; margin-top: 0; }
    .banner { position: absolute; left: 441px; top: 17px; display: flex; font: 24.6px "Liberation Sans", sans-serif; color: #00f0f0; white-space: pre; }
    .banner .y { color: #c8ff00; margin: 0 26px 0 22px; }
    .weather { position: absolute; left: 66px; top: 24px; display: flex; align-items: center; gap: 14px; font-size: 16px; }
    .place { position: absolute; left: 296px; top: 27px; font-size: 12px; color: #aab; }
    .actions { position: absolute; left: 1290px; top: 17px; display: flex; align-items: center; gap: 8px; }
    .slash { position: absolute; left: 1539px; top: 9px; width: 2px; height: 21px; background: #ddd; }
    .uptime { position: absolute; left: 1578px; top: 16px; font-size: 15px; }
    .uptime small { font-size: 11px; }
    .tb { position: absolute; top: 62px; }
    .am { position: absolute; left: 1717px; top: 2px; font: 18px Roboto, sans-serif; color: #a5307f; }
    .digits { position: absolute; font-family: Roboto, sans-serif; font-weight: 400; font-size: 253px; line-height: 253px; transform-origin: 0 0; transform: scaleX(.84); white-space: nowrap; letter-spacing: -11px; }
    .hh { left: 1679px; top: -11px; color: rgba(150, 150, 165, .62); }
    .mm { left: 1678px; top: 123px; color: rgba(60, 150, 210, .85); }
    .dateline { position: absolute; left: 1719px; top: 360px; width: 1px; height: 42px; background: #8d97b8; }
    .datetext { position: absolute; left: 1728px; top: 365px; font-size: 19px; line-height: 22px; color: #98a2c2; }
    .cal { position: absolute; left: 1818px; top: 370px; width: 75px; color: #b7bfd8; font: 11.5px "Open Sans", sans-serif; }
    .calhead { display: flex; height: 17px; align-items: center; border-bottom: 1px solid #8d97b8; font-weight: 600; }
    .calhead span:first-child { width: 40px; padding-left: 6px; box-sizing: border-box; border-right: 1px solid #8d97b8; }
    .calhead span:last-child { padding-left: 9px; }
    .days { margin-left: 29px; width: 16px; display: flex; flex-direction: column; }
    .day { height: 16px; line-height: 16px; text-align: center; position: relative; }
    .day.now { background: rgba(190, 200, 230, .45); color: #fff; }
    .day .w { position: absolute; right: 19px; top: 0; }
    .day .d { position: absolute; left: 21px; top: 0; }
    .ring { position: absolute; top: 429px; }
    .graph { position: absolute; left: 1630px; }
    .pct { position: absolute; font: 700 15px "Open Sans", sans-serif; color: #e6eaf6; }
    .meter { position: absolute; left: 1772px; width: 5px; height: 55px; background: rgba(170, 185, 225, .4); display: flex; align-items: flex-end; }
    .meter i { display: block; width: 100%; background: #c9d1e8; }
    .stat { position: absolute; font: 700 9.5px/9px "Open Sans", sans-serif; color: #e6eaf6; white-space: nowrap; }
    .stat b { display: block; font-size: 13.5px; line-height: 16px; }
    .activate { position: absolute; left: 1505px; top: 952px; color: #787878; }
    .activate div:first-child { font-size: 21px; line-height: 30px; }
    .activate div:last-child { font-size: 16px; line-height: 20px; margin-top: -3px; }
  `;

  render() {
    return html`
      ${desktopIcons.map(d => html`<div class="dicon ${d.blue ? 'blue' : ''}" style="left:${d.x}px;top:${d.y}px">${d.icon}<span>${d.label}</span></div>`)}
      <div class="banner"><span>Ver. 21H2  Os Build 19044.1147</span><span class="y">Made by ChumStall</span><span>Optimized by do98</span></div>
      <div class="weather">
        <svg width="30" height="24" viewBox="0 0 30 24" fill="none" stroke="#fff" stroke-width="1.7"><path d="M9 23H23a6 6 0 0 0 1-12 8 8 0 0 0-15-1 6.5 6.5 0 0 0 0 13z"></path><path d="M4 13a6 6 0 0 1 8-9"></path></svg>
        <span>흐림, 4</span>
      </div>
      <div class="place">정자동, KR</div>
      <div class="actions">
        <svg width="24" height="24" viewBox="0 0 24 24"><circle cx="6" cy="6" r="5.5" fill="#fff"></circle><path d="M9 9l13 13" stroke="#eee" stroke-width="4"></path></svg>
        ${powerRing(21)}${refreshRing(22)}${powerOpen(24)}
      </div>
      <div class="slash"></div>
      <div class="uptime">3시간 29분 <small>사용중..</small></div>
      ${tops.map(t => html`<div class="tb" style="left:${t.x}px">${t.i}</div>`)}
      <div class="am">AM</div>
      <div class="digits hh">01</div>
      <div class="digits mm">37</div>
      <div class="dateline"></div>
      <div class="datetext">화요일<br />11월09일</div>
      <div class="cal">
        <div class="calhead"><span>2021</span><span>11</span></div>
        <div class="days">
          ${Array.from({ length: 30 }, (_, i) => {
            const n = String(i + 1).padStart(2, '0');
            return i === 8
              ? html`<div class="day now"><span class="w">w46</span>${n}<span class="d">Tue</span></div>`
              : html`<div class="day">${n}</div>`;
          })}
        </div>
      </div>
      <div class="ring" style="left:1738px">${refreshRing(22)}</div>
      <div class="ring" style="left:1783px">${powerRing(22)}</div>
      <svg class="graph" style="top:497px" width="99" height="17" viewBox="0 0 99 17"><polyline points=${`0,16 ${sparkPts} 99,16`} fill="rgba(190,200,230,.35)" stroke="rgba(200,210,235,.7)"></polyline></svg>
      <div class="pct" style="left:1741px;top:495px">1%</div>
      <div class="meter" style="top:474px"><i style="height:1px"></i></div>
      <div class="stat" style="left:1781px;top:497px"><b style="margin-left:8px">CPU</b>3401 MHz</div>
      <svg class="graph" style="top:581px" width="99" height="4" viewBox="0 0 99 4"><rect width="99" height="3" fill="rgba(190,200,230,.5)"></rect></svg>
      <div class="pct" style="left:1737px;top:567px">10%</div>
      <div class="meter" style="top:546px"><i style="height:5px"></i></div>
      <div class="stat" style="left:1788px;top:569px"><b>RAM</b>3.2 GB<br />of 31.9 GB</div>
      <div class="activate"><div>Windows 정품 인증</div><div>[설정]으로 이동하여 Windows를 정품 인증합니다.</div></div>
    `;
  }
}

@customElement('app-root')
export class AppRoot extends LitElement {
  static styles = css`
    :host { display: block; position: relative; width: 1920px; height: 1080px; overflow: hidden; font-family: "Noto Sans", "Noto Sans CJK KR", sans-serif; background: linear-gradient(180deg, #05104a 0, #07165a 200px, #0a1f6a 350px, #163690 520px, #24489c 640px, #56659e 700px, #8a7690 760px, #ad765f 810px, #a06a52 850px, #6a5060 865px, #4a4560 875px, #33335a 888px, #1a1a33 905px, #0c0c18 960px, #030306 1040px); }
    :host::after { content: ''; position: absolute; inset: 0; border: solid #5b9ff0; border-width: 2px 0 1px 2px; pointer-events: none; }
    .land { position: absolute; left: 0; top: 840px; filter: blur(1.5px); }
    chrome-window { position: absolute; left: 116px; top: 51px; width: 1192px; height: 990px; }
    explorer-window { position: absolute; left: 738px; top: 241px; width: 858px; height: 612px; }
    task-bar { position: absolute; left: 0; right: 0; top: 1051px; }
    .magnifier { position: absolute; left: 1468px; top: 174px; width: 121px; height: 121px; box-sizing: border-box; border: 1px solid #000; background: #000; display: flex; flex-direction: column; color: #fff; font: 11.5px/17px "Noto Sans", sans-serif; }
    .lens { height: 79px; flex: none; background: #07124a; position: relative; }
    .lens i { position: absolute; background: #5ba0f0; }
    .lens .v { left: 60px; top: 0; bottom: 0; width: 1px; }
    .lens .h { top: 39px; left: 0; right: 0; height: 1px; }
    .readout { padding: 3px 0 0 4px; }
  `;

  render() {
    return html`
      <svg class="land" width="1920" height="200" viewBox="0 0 1920 200">
        <g fill="#2e2c4a" opacity=".75">
          <ellipse cx="1442" cy="33" rx="13" ry="10"></ellipse><ellipse cx="1432" cy="38" rx="10" ry="6"></ellipse>
          <ellipse cx="1490" cy="30" rx="16" ry="13"></ellipse><ellipse cx="1505" cy="36" rx="20" ry="8"></ellipse><ellipse cx="1520" cy="31" rx="12" ry="10"></ellipse>
          <ellipse cx="40" cy="36" rx="26" ry="7"></ellipse>
        </g>
        <g fill="#4a4762" opacity=".7"><ellipse cx="1630" cy="38" rx="26" ry="8"></ellipse><ellipse cx="1675" cy="39" rx="22" ry="7"></ellipse></g>
        <path d="M1420 178q200 22 500 40" stroke="#22222c" fill="none"></path>
      </svg>
      <desk-widgets></desk-widgets>
      <chrome-window></chrome-window>
      <explorer-window></explorer-window>
      <div class="magnifier">
        <div class="lens"><i class="v"></i><i class="h"></i></div>
        <div class="readout">1920 x 1080<br />RGB:(7,18,74)</div>
      </div>
      <task-bar></task-bar>
    `;
  }
}
